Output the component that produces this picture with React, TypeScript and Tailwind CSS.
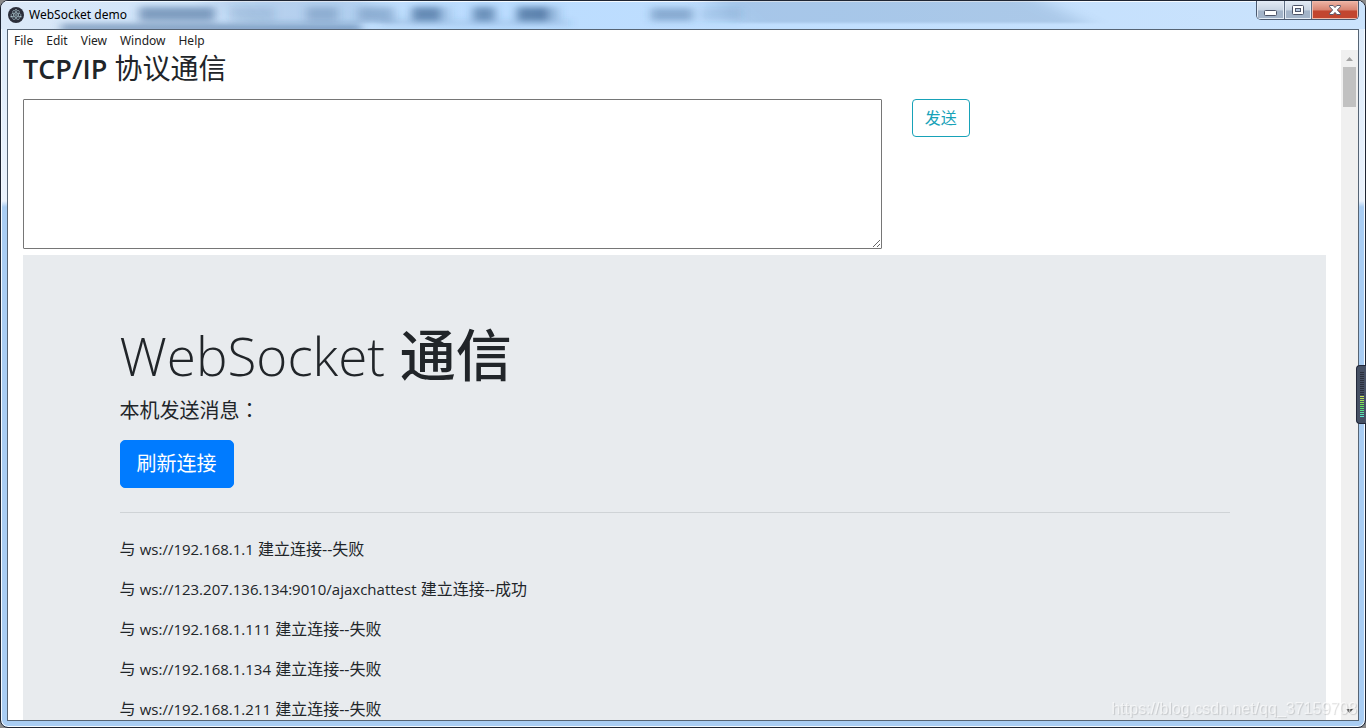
import React from "react";

const menus = ["File", "Edit", "View", "Window", "Help"];

const connections = [
  { url: "ws://192.168.1.1", result: "失败" },
  { url: "ws://123.207.136.134:9010/ajaxchattest", result: "成功" },
  { url: "ws://192.168.1.111", result: "失败" },
  { url: "ws://192.168.1.134", result: "失败" },
  { url: "ws://192.168.1.211", result: "失败" },
];

const levels = Array.from({ length: 23 }, (_, i) => i);

function levelColor(i: number) {
  if (i < 12) return "#2b303c";
  return `hsl(${70 + (i - 12) * 10} 70% 62%)`;
}

function ElectronIcon() {
  return (
    <svg viewBox="0 0 16 16" className="size-4 shrink-0" aria-hidden="true">
      <circle cx="8" cy="8" r="8" fill="#2b2e3a" />
      <g fill="none" stroke="#a9c4cc" strokeWidth="0.6">
        <ellipse cx="8" cy="8" rx="5.2" ry="2" />
        <ellipse cx="8" cy="8" rx="5.2" ry="2" transform="rotate(60 8 8)" />
        <ellipse cx="8" cy="8" rx="5.2" ry="2" transform="rotate(120 8 8)" />
      </g>
      <g fill="#c4dde2">
        <circle cx="8" cy="8" r="0.8" />
        <circle cx="3.2" cy="9.8" r="0.8" />
        <circle cx="12.8" cy="9.8" r="0.8" />
        <circle cx="8" cy="2.8" r="0.7" />
      </g>
    </svg>
  );
}

function GlassReflections() {
  return (
    <svg className="absolute inset-0 h-full w-full" aria-hidden="true">
      <defs>
        <filter id="soft" x="-10%" y="-100%" width="120%" height="300%">
          <feGaussianBlur stdDeviation="5 3" />
        </filter>
        <filter id="sheen" x="-20%" y="-20%" width="140%" height="140%">
          <feGaussianBlur stdDeviation="14 1" />
        </filter>
      </defs>
      <path d="M705-4h330l50 26H735z" fill="#38608f" opacity="0.18" filter="url(#sheen)" />
      <path d="M210-4h150l40 26H240z" fill="#38608f" opacity="0.12" filter="url(#sheen)" />
      <g filter="url(#soft)" fill="#38608f">
        <rect x="138" y="6" width="76" height="14" opacity="0.55" />
        <rect x="60" y="23" width="300" height="8" opacity="0.55" />
        <rect x="228" y="6" width="45" height="14" opacity="0.15" />
        <rect x="305" y="6" width="32" height="14" opacity="0.3" />
        <rect x="357" y="6" width="36" height="14" opacity="0.3" />
        <rect x="411" y="6" width="28" height="14" opacity="0.65" />
        <rect x="436" y="6" width="14" height="14" opacity="0.2" />
        <rect x="472" y="6" width="22" height="14" opacity="0.6" />
        <rect x="516" y="6" width="30" height="14" opacity="0.7" />
        <rect x="540" y="6" width="18" height="14" opacity="0.3" />
        <rect x="380" y="20" width="190" height="4" opacity="0.2" />
        <rect x="650" y="7" width="42" height="13" opacity="0.4" />
        <rect x="700" y="7" width="40" height="13" opacity="0.15" />
      </g>
    </svg>
  );
}

function TitleBar() {
  return (
    <header className="relative flex h-[28px] shrink-0 items-start justify-between bg-linear-to-r from-[#dce9f8] via-[#badcff] via-35% to-[#cbe3fc] pl-[7px] shadow-[inset_0_1px_0_#f5faff]">
      <GlassReflections />
      <div className="relative flex items-center gap-[5px] pt-[6px] font-['Noto_Sans','Noto_Sans_CJK_SC',sans-serif] text-[12px] leading-4 text-black">
        <ElectronIcon />
        <span>WebSocket demo</span>
      </div>
      <div className="relative mr-[6px] flex h-[19px] overflow-hidden rounded-b-[5px] border border-t-0 border-[#4b5a70]">
        <button
          aria-label="Minimize"
          className="flex w-[28px] items-center justify-center border-r border-[#5f6e84] bg-linear-to-b from-[#e3ebf5] from-0% via-[#c9d5e3] via-50% to-[#a3b4c9] to-55% shadow-[inset_0_0_0_1px_#e4ecf6]"
        >
          <svg viewBox="0 0 13 10" className="mt-1 h-[10px] w-[13px]">
            <rect x="0.5" y="3.5" width="12" height="5" rx="1" fill="#fff" stroke="#4d5468" />
          </svg>
        </button>
        <button
          aria-label="Restore"
          className="flex w-[27px] items-center justify-center border-r border-[#5f6e84] bg-linear-to-b from-[#e3ebf5] from-0% via-[#c9d5e3] via-50% to-[#a3b4c9] to-55% shadow-[inset_0_0_0_1px_#e4ecf6]"
        >
          <svg viewBox="0 0 12 10" className="h-[10px] w-[12px]">
            <rect x="0.5" y="0.5" width="11" height="9" rx="1" fill="#fff" stroke="#4d5468" />
            <rect x="3.5" y="3.5" width="5" height="3" fill="#b7c9df" stroke="#4d5468" />
          </svg>
        </button>
        <button
          aria-label="Close"
          className="flex w-[46px] items-center justify-center bg-linear-to-b from-[#eeb5a6] from-0% via-[#d88472] via-50% to-[#c2452f] to-55% shadow-[inset_0_0_0_1px_#f0b9a9]"
        >
          <svg viewBox="0 0 12 10" className="h-[10px] w-[12px]">
            <path
              d="M.6.5h3.6L6 2.6 7.8.5h3.6v1.3L8.3 5l3.1 3.2v1.3H7.8L6 7.4 4.2 9.5H.6V8.2L3.7 5 .6 1.8z"
              fill="#fff"
              stroke="#4d4f63"
              strokeWidth="0.9"
            />
          </svg>
        </button>
      </div>
    </header>
  );
}

function ScrollBar() {
  return (
    <div className="flex w-[17px] shrink-0 flex-col items-center justify-between bg-[#f0f0f0]" aria-hidden="true">
      <div className="flex flex-col items-center">
        <svg viewBox="0 0 17 17" className="size-[17px]">
          <path d="M5 11h7L8.500 7z" fill="#a3a3a3" />
        </svg>
        <div className="h-10 w-[13px] bg-[#c1c1c1]" />
      </div>
      <svg viewBox="0 0 17 17" className="size-[17px]">
        <path d="M5 6h7L8.500 10z" fill="#505050" />
      </svg>
    </div>
  );
}

function LevelMeter() {
  return (
    <div
      aria-hidden="true"
      className="fixed top-[365px] right-0 flex h-[59px] w-[10px] flex-col items-end gap-px rounded-l-[4px] border border-r-0 border-[#22283a] bg-[#465064] pt-[6px] pr-[2px]"
    >
      {levels.map((i) => (
        <span key={i} className="h-px w-1 shrink-0" style={{ backgroundColor: levelColor(i) }} />
      ))}
    </div>
  );
}

export default function App() {
  return (
    <div className="h-screen bg-[#8a8a8a]">
      <div className="flex h-full flex-col overflow-hidden rounded-[8px] border border-[#1e2533] bg-linear-to-b from-[#dcebfb] from-0% via-[#eaf2fc] via-[200px] to-[#a9cdf3] to-[206px] shadow-[inset_0_0_0_1px_#f5faff]">
        <TitleBar />
        <div className="mx-[6px] mb-[6px] flex min-h-0 flex-1 flex-col overflow-hidden border border-[#566474] bg-white">
          <nav className="flex h-[20px] shrink-0 items-center gap-[13px] px-[6px] pt-px font-['Noto_Sans',sans-serif] text-[12px] leading-5 text-[#222]">
            {menus.map((m) => (
              <button key={m}>{m}</button>
            ))}
          </nav>
          <div className="flex min-h-0 flex-1">
            <main className="min-w-0 flex-1 px-[15px] font-['Open_Sans','Noto_Sans_CJK_SC',sans-serif] text-[16px] leading-6 text-[#212529]">
              <h1 className="mb-3 text-[28px] leading-9 font-normal">
                <span className="text-[27px] font-semibold">TCP/IP</span> 协议通信
              </h1>
              <div className="-mx-[15px] grid grid-cols-3">
                <div className="col-span-2 px-[15px]">
                  <textarea
                    aria-label="TCP/IP 消息"
                    className="block h-[150px] w-full resize rounded-[1px] border border-[#767676] bg-white p-[2px]"
                  />
                </div>
                <div className="px-[15px]">
                  <button className="h-[38px] rounded-[4px] border border-[#17a2b8] px-3 text-[#17a2b8]">
                    发送
                  </button>
                </div>
              </div>
              <section className="mt-[6px] bg-[#e8ebee] px-8 py-16">
                <div className="mx-auto max-w-[1140px] px-[15px]">
                  <h2 className="mb-1.5 pt-0.5 text-[56px] leading-[67px] font-medium">
                    <span className="text-[53px] font-light">WebSocket</span> 通信
                  </h2>
                  <p className="mb-[14px] text-[20px] leading-[30px]">
                    本机发送消息<span className="font-['Noto_Sans_CJK_TC',sans-serif]">：</span>
                  </p>
                  <button className="h-12 rounded-[5px] border border-[#007bff] bg-[#007bff] px-4 text-[20px] leading-[30px] text-white">
                    刷新连接
                  </button>
                  <hr className="my-6 border-[#cfd3d6]" />
                  {connections.map((c) => (
                    <p key={c.url} className="mb-4">
                      与 <span className="text-[15px]">{c.url}</span> 建立连接--{c.result}
                    </p>
                  ))}
                </div>
              </section>
            </main>
            <ScrollBar />
          </div>
        </div>
      </div>
      <LevelMeter />
      <div className="pointer-events-none fixed right-[9px] bottom-[7px] font-['Liberation_Sans',sans-serif] text-[16px] leading-6 text-white/60 [text-shadow:1px_1px_1px_rgb(0_0_0/0.15)]">
        https://blog.csdn.net/qq_37159708
      </div>
    </div>
  );
}
